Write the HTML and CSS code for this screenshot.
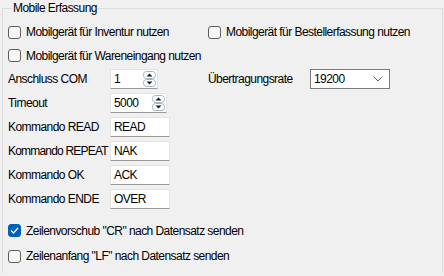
FILE: index.html
```html
<!DOCTYPE html>
<html lang="de">
<head>
  <meta charset="UTF-8">
  <title>Mobile Erfassung</title>
  <link rel="stylesheet" href="styles.css">
</head>
<body>
  <fieldset class="group">
    <legend>Mobile Erfassung</legend>

    <div class="row check-row first">
      <label class="check col-left"><span class="box"></span>Mobilgerät für Inventur nutzen</label>
      <label class="check"><span class="box"></span>Mobilgerät für Bestellerfassung nutzen</label>
    </div>
    <div class="row check-row second">
      <label class="check"><span class="box"></span>Mobilgerät für Wareneingang nutzen</label>
    </div>

    <div class="row field">
      <span class="lbl">Anschluss COM</span>
      <div class="spin narrow"><span class="val">1</span><span class="arrows"><svg width="13" height="16" viewBox="0 0 13 16"><rect x="0.5" y="0.5" width="12" height="7" rx="3" fill="#fff" stroke="#9bb4cc"/><path d="M3.5 5.5 L6.5 2.5 L9.5 5.5 Z" fill="#1a1a1a"/><rect x="0.5" y="8.5" width="12" height="7" rx="3" fill="#fff" stroke="#9bb4cc"/><path d="M3.5 10.5 L6.5 13.5 L9.5 10.5 Z" fill="#1a1a1a"/></svg></span></div>
      <span class="lbl right-lbl">Übertragungsrate</span>
      <div class="combo"><span class="val">19200</span><svg class="chev" width="10" height="6" viewBox="0 0 10 6"><path d="M0.5 0.5 L5 5 L9.5 0.5" fill="none" stroke="#606060" stroke-width="1"/></svg></div>
    </div>
    <div class="row field">
      <span class="lbl">Timeout</span>
      <div class="spin wide"><span class="val">5000</span><span class="arrows"><svg width="13" height="16" viewBox="0 0 13 16"><rect x="0.5" y="0.5" width="12" height="7" rx="3" fill="#fff" stroke="#9bb4cc"/><path d="M3.5 5.5 L6.5 2.5 L9.5 5.5 Z" fill="#1a1a1a"/><rect x="0.5" y="8.5" width="12" height="7" rx="3" fill="#fff" stroke="#9bb4cc"/><path d="M3.5 10.5 L6.5 13.5 L9.5 10.5 Z" fill="#1a1a1a"/></svg></span></div>
    </div>
    <div class="row field">
      <span class="lbl">Kommando READ</span>
      <div class="text">READ</div>
    </div>
    <div class="row field">
      <span class="lbl tight">Kommando REPEAT</span>
      <div class="text">NAK</div>
    </div>
    <div class="row field">
      <span class="lbl">Kommando OK</span>
      <div class="text">ACK</div>
    </div>
    <div class="row field">
      <span class="lbl">Kommando ENDE</span>
      <div class="text">OVER</div>
    </div>

    <div class="row check-row cr">
      <label class="check"><span class="box checked"><svg width="9" height="7" viewBox="0 0 9 7"><path d="M1 3.5 L3.5 6 L8 1" fill="none" stroke="#fff" stroke-width="1.3"/></svg></span>Zeilenvorschub "CR" nach Datensatz senden</label>
    </div>
    <div class="row check-row lf">
      <label class="check"><span class="box"></span>Zeilenanfang "LF" nach Datensatz senden</label>
    </div>
  </fieldset>
</body>
</html>
```

FILE: styles.css
```css
html, body {
  margin: 0;
  height: 100%;
  overflow: hidden;
}
body {
  background: #f0f0f0;
  font-family: "Liberation Sans", Arial, sans-serif;
  font-size: 12px;
  letter-spacing: -0.55px;
  color: #000;
}
.group {
  margin: 0 1px 0 2px;
  padding: 4px 0 0 5px;
  border: 1px solid #dcdcdc;
  border-bottom: none;
  height: 268px;
}
.group legend {
  padding: 0 1px;
  margin-left: 4px;
  line-height: 16px;
}
.row {
  display: flex;
  align-items: center;
  height: 24px;
  white-space: nowrap;
}
.row.second { height: 23px; }
.row.cr { margin-top: 7px; height: 25px; }
.row.lf { height: 26px; }
.check {
  display: flex;
  align-items: center;
  gap: 5px;
}
.col-left { width: 200px; }
.box {
  width: 11px;
  height: 11px;
  border: 1px solid #5d5d5d;
  border-radius: 3px;
  background: #f7f7f7;
  display: flex;
  align-items: center;
  justify-content: center;
}
.box.checked {
  background: #005fb8;
  border-color: #005fb8;
}
.lbl { width: 102px; flex: none; }
.lbl.tight { letter-spacing: -0.8px; }
.right-lbl { margin-left: 50px; }
.spin, .text, .combo {
  box-sizing: border-box;
  height: 20px;
  background: #fff;
  border: 1px solid #e3e3e3;
  border-bottom-color: #9a9a9a;
  display: flex;
  align-items: center;
  padding-left: 3px;
}
.spin { justify-content: space-between; padding-right: 1px; }
.spin.narrow { width: 48px; }
.spin.wide { width: 57px; }
.arrows { display: flex; }
.text { width: 60px; }
.combo {
  width: 80px;
  border: 1px solid #7a7a7a;
  justify-content: space-between;
  padding-right: 6px;
}
.chev { display: block; }
```
